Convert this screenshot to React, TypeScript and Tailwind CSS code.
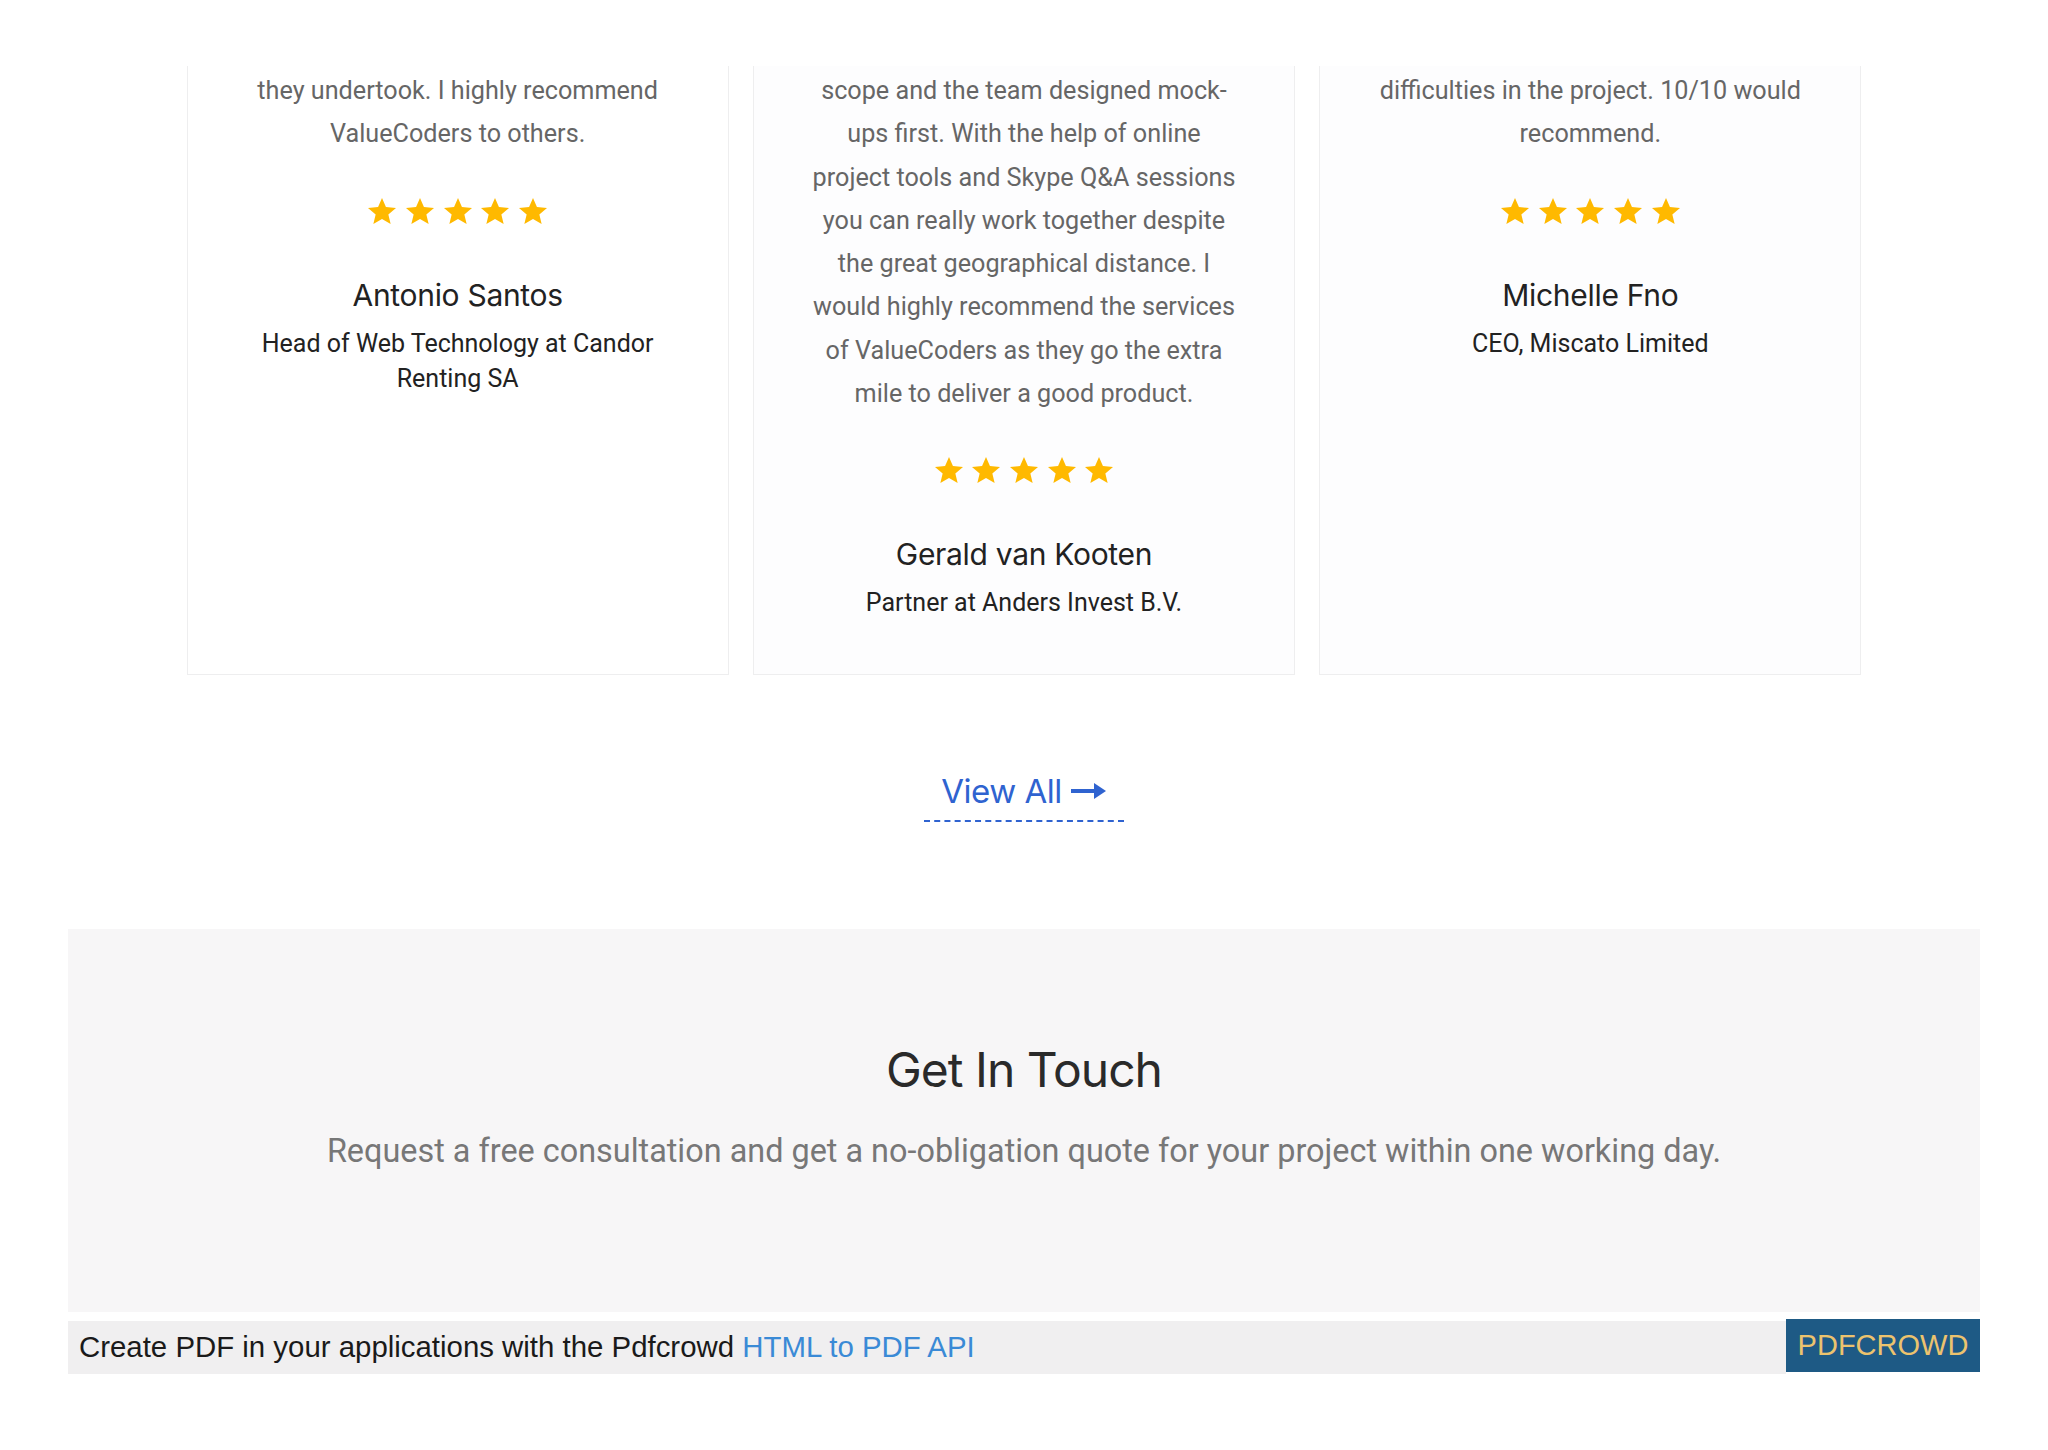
import React from "react";

const Star = () => (
  <svg width="28" height="26" viewBox="2 2 20 19" className="block" preserveAspectRatio="none">
    <path
      fill="#ffb900"
      d="M12 17.27L18.18 21l-1.64-7.03L22 9.24l-7.19-.61L12 2 9.19 8.63 2 9.24l5.46 4.73L5.82 21z"
    />
  </svg>
);

type T = { name: string; title: string; lines: string[] };

const items: T[] = [
  {
    lines: ["they undertook. I highly recommend", "ValueCoders to others."],
    name: "Antonio Santos",
    title: "Head of Web Technology at Candor Renting SA",
  },
  {
    lines: [
      "scope and the team designed mock-",
      "ups first. With the help of online",
      "project tools and Skype Q&A sessions",
      "you can really work together despite",
      "the great geographical distance. I",
      "would highly recommend the services",
      "of ValueCoders as they go the extra",
      "mile to deliver a good product.",
    ],
    name: "Gerald van Kooten",
    title: "Partner at Anders Invest B.V.",
  },
  {
    lines: ["difficulties in the project. 10/10 would", "recommend."],
    name: "Michelle Fno",
    title: "CEO, Miscato Limited",
  },
];

export default function App() {
  return (
    <div
      className="w-[2048px] h-[1450px] bg-white overflow-hidden pt-[66px]"
      style={{ fontFamily: "Roboto, 'Noto Sans', sans-serif" }}
    >
      <div className="mx-auto w-[1675px] grid grid-cols-3 gap-[24px]">
        {items.map((it, i) => (
          <div
            key={i}
            className={`h-[609px] border-x border-b border-[#eeeeef] ${i === 0 ? "bg-white" : "bg-[#fdfdfe]"} px-[40px] pt-[3px] text-center flex flex-col items-center`}
          >
            <p className="text-[25.2px] leading-[43.25px] text-[#666666]">
              {it.lines.map((l, j) => (
                <span key={j} className="block whitespace-nowrap">
                  {l}
                </span>
              ))}
            </p>
            <div className="mt-[42px] flex gap-[9.6px]">
              <Star />
              <Star />
              <Star />
              <Star />
              <Star />
            </div>
            <h3
              className="mt-[52px] text-[30px] leading-[38px] text-[#222222] tracking-[-0.3px]"
              style={{ fontFamily: "Inter, sans-serif" }}
            >
              {it.name}
            </h3>
            <div className="mt-[12px] w-[410px] text-[25px] leading-[35px] text-[#222222]">
              {it.title}
            </div>
          </div>
        ))}
      </div>

      <div className="mt-[96px] flex justify-center">
        <a
          className="inline-flex items-center gap-[9px] px-[17px] pb-[9px] border-b-2 border-dashed border-[#2f63d0] text-[#2f63d0] text-[33px] leading-[40px] tracking-[-0.5px]"
          style={{ fontFamily: "Inter, sans-serif" }}
        >
          View All
          <svg width="36" height="18" viewBox="0 0 36 18" className="block">
            <path d="M0 9h26" stroke="#2f63d0" strokeWidth="4" />
            <path d="M23 1l12 8-12 8z" fill="#2f63d0" />
          </svg>
        </a>
      </div>

      <section className="mt-[107px] mx-auto w-[1912px] h-[383px] bg-[#f7f6f7] pt-[113px] text-center">
        <h2
          className="text-[48px] leading-[56px] text-[#2a2a2a] tracking-[-1px]"
          style={{ fontFamily: "Inter, sans-serif" }}
        >
          Get In Touch
        </h2>
        <p className="mt-[34px] text-[32.4px] leading-[38px] text-[#777777]">
          Request a free consultation and get a no-obligation quote for your project within one working day.
        </p>
      </section>

      <div
        className="mt-[7px] mx-auto w-[1912px] flex items-start"
        style={{ fontFamily: "'Liberation Sans', Arial, sans-serif" }}
      >
        <div className="flex-1 mt-[2px] h-[53px] bg-[#f0eff0] flex items-center pl-[11px] text-[29.4px] text-[#1a1a1a]">
          Create PDF in your applications with the Pdfcrowd&nbsp;
          <span className="text-[#3a8ad6]">HTML to PDF API</span>
        </div>
        <div className="w-[194px] h-[53px] bg-[#1e5a85] flex items-center justify-center text-[29px] text-[#ecc36e]">
          PDFCROWD
        </div>
      </div>
    </div>
  );
}
